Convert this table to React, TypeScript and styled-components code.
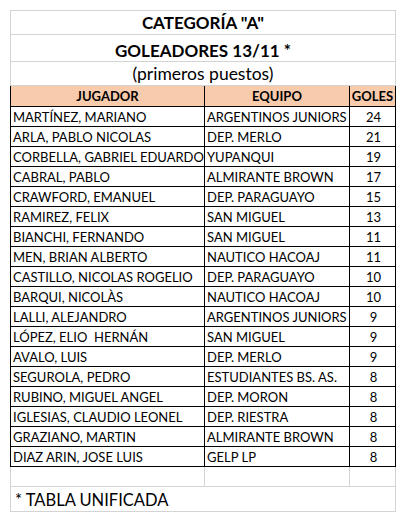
import { FC } from "react";
import styled, { createGlobalStyle } from "styled-components";

const GlobalStyle = createGlobalStyle`
    html, body {
        margin: 0;
        padding: 0;
        background: #ffffff;
    }
    body {
        font-family: Lato, "Open Sans", "Liberation Sans", sans-serif;
        color: #000000;
    }
`;

const scorers = [
    { name: 'MARTÍNEZ, MARIANO', team: 'ARGENTINOS JUNIORS', goals: 24 },
    { name: 'ARLA, PABLO NICOLAS', team: 'DEP. MERLO', goals: 21 },
    { name: 'CORBELLA, GABRIEL EDUARDO', team: 'YUPANQUI', goals: 19 },
    { name: 'CABRAL, PABLO', team: 'ALMIRANTE BROWN', goals: 17 },
    { name: 'CRAWFORD, EMANUEL', team: 'DEP. PARAGUAYO', goals: 15 },
    { name: 'RAMIREZ, FELIX', team: 'SAN MIGUEL', goals: 13 },
    { name: 'BIANCHI, FERNANDO', team: 'SAN MIGUEL', goals: 11 },
    { name: 'MEN, BRIAN ALBERTO', team: 'NAUTICO HACOAJ', goals: 11 },
    { name: 'CASTILLO, NICOLAS ROGELIO', team: 'DEP. PARAGUAYO', goals: 10 },
    { name: 'BARQUI, NICOLÀS', team: 'NAUTICO HACOAJ', goals: 10 },
    { name: 'LALLI, ALEJANDRO', team: 'ARGENTINOS JUNIORS', goals: 9 },
    { name: 'LÓPEZ, ELIO  HERNÁN', team: 'SAN MIGUEL', goals: 9 },
    { name: 'AVALO, LUIS', team: 'DEP. MERLO', goals: 9 },
    { name: 'SEGUROLA, PEDRO', team: 'ESTUDIANTES BS. AS.', goals: 8 },
    { name: 'RUBINO, MIGUEL ANGEL', team: 'DEP. MORON', goals: 8 },
    { name: 'IGLESIAS, CLAUDIO LEONEL', team: 'DEP. RIESTRA', goals: 8 },
    { name: 'GRAZIANO, MARTIN', team: 'ALMIRANTE BROWN', goals: 8 },
    { name: 'DIAZ ARIN, JOSE LUIS', team: 'GELP LP', goals: 8 },
];

const Page = styled.div`
    padding: 10px 0 0 10px;
`;

const Sheet = styled.table`
    border-collapse: collapse;
    table-layout: fixed;
    width: 385px;
`;

const Grid = '#d4d4d4';

// heights below are content-box: row pitch = height + padding + 1px border
const TitleCell = styled.td<{ $height: number; $bold?: boolean; $size: number; $drop?: number }>`
    height: ${p => p.$height}px;
    padding: ${p => p.$drop ?? 0}px 0 0;
    border: 1px solid ${Grid};
    text-align: center;
    font-size: ${p => p.$size}px;
    font-weight: ${p => (p.$bold ? 700 : 400)};
    line-height: 1;
    white-space: nowrap;
    vertical-align: middle;
`;

const HeadCell = styled.th`
    height: 19px;
    padding: 1px 0 0;
    border: 1px solid #000;
    background: #f8cbad;
    font-size: 13px;
    font-weight: 700;
    line-height: 1;
    text-align: center;
    white-space: nowrap;
    vertical-align: middle;
`;

const Cell = styled.td<{ $center?: boolean }>`
    height: 17px;
    padding: 2px 0 0 2px;
    border: 1px solid #000;
    font-size: 13px;
    line-height: 1;
    text-align: ${p => (p.$center ? 'center' : 'left')};
    white-space: pre;
    overflow: hidden;
    vertical-align: middle;
`;

const EmptyCell = styled.td`
    height: 19px;
    padding: 0;
    border: 1px solid ${Grid};
    border-top-color: #000;
`;

const FootCell = styled.td`
    height: 22px;
    padding: 2px 0 0 4px;
    border: 1px solid ${Grid};
    font-size: 16.5px;
    line-height: 1;
    white-space: nowrap;
    vertical-align: middle;
`;

export const ScorersTable: FC = () => (
    <Sheet>
        <colgroup>
            <col style={{ width: 194 }} />
            <col style={{ width: 145 }} />
            <col style={{ width: 46 }} />
        </colgroup>
        <tbody>
            <tr>
                <TitleCell colSpan={3} $height={23} $size={17} $bold>
                    CATEGORÍA "A"
                </TitleCell>
            </tr>
            <tr>
                <TitleCell colSpan={3} $height={22} $size={17} $drop={4} $bold>
                    GOLEADORES 13/11 *
                </TitleCell>
            </tr>
            <tr>
                <TitleCell colSpan={3} $height={22} $size={17.5} $drop={1}>
                    (primeros puestos)
                </TitleCell>
            </tr>
            <tr>
                <HeadCell>JUGADOR</HeadCell>
                <HeadCell>EQUIPO</HeadCell>
                <HeadCell>GOLES</HeadCell>
            </tr>
            {scorers.map((s, i) => (
                <tr key={`${s.name}_${i}`}>
                    <Cell>{s.name}</Cell>
                    <Cell>{s.team}</Cell>
                    <Cell $center>{s.goals}</Cell>
                </tr>
            ))}
            <tr>
                <EmptyCell />
                <EmptyCell />
                <EmptyCell />
            </tr>
            <tr>
                <FootCell colSpan={3}>* TABLA UNIFICADA</FootCell>
            </tr>
        </tbody>
    </Sheet>
);

export default function App() {
    return (
        <Page>
            <GlobalStyle />
            <ScorersTable />
        </Page>
    );
}
